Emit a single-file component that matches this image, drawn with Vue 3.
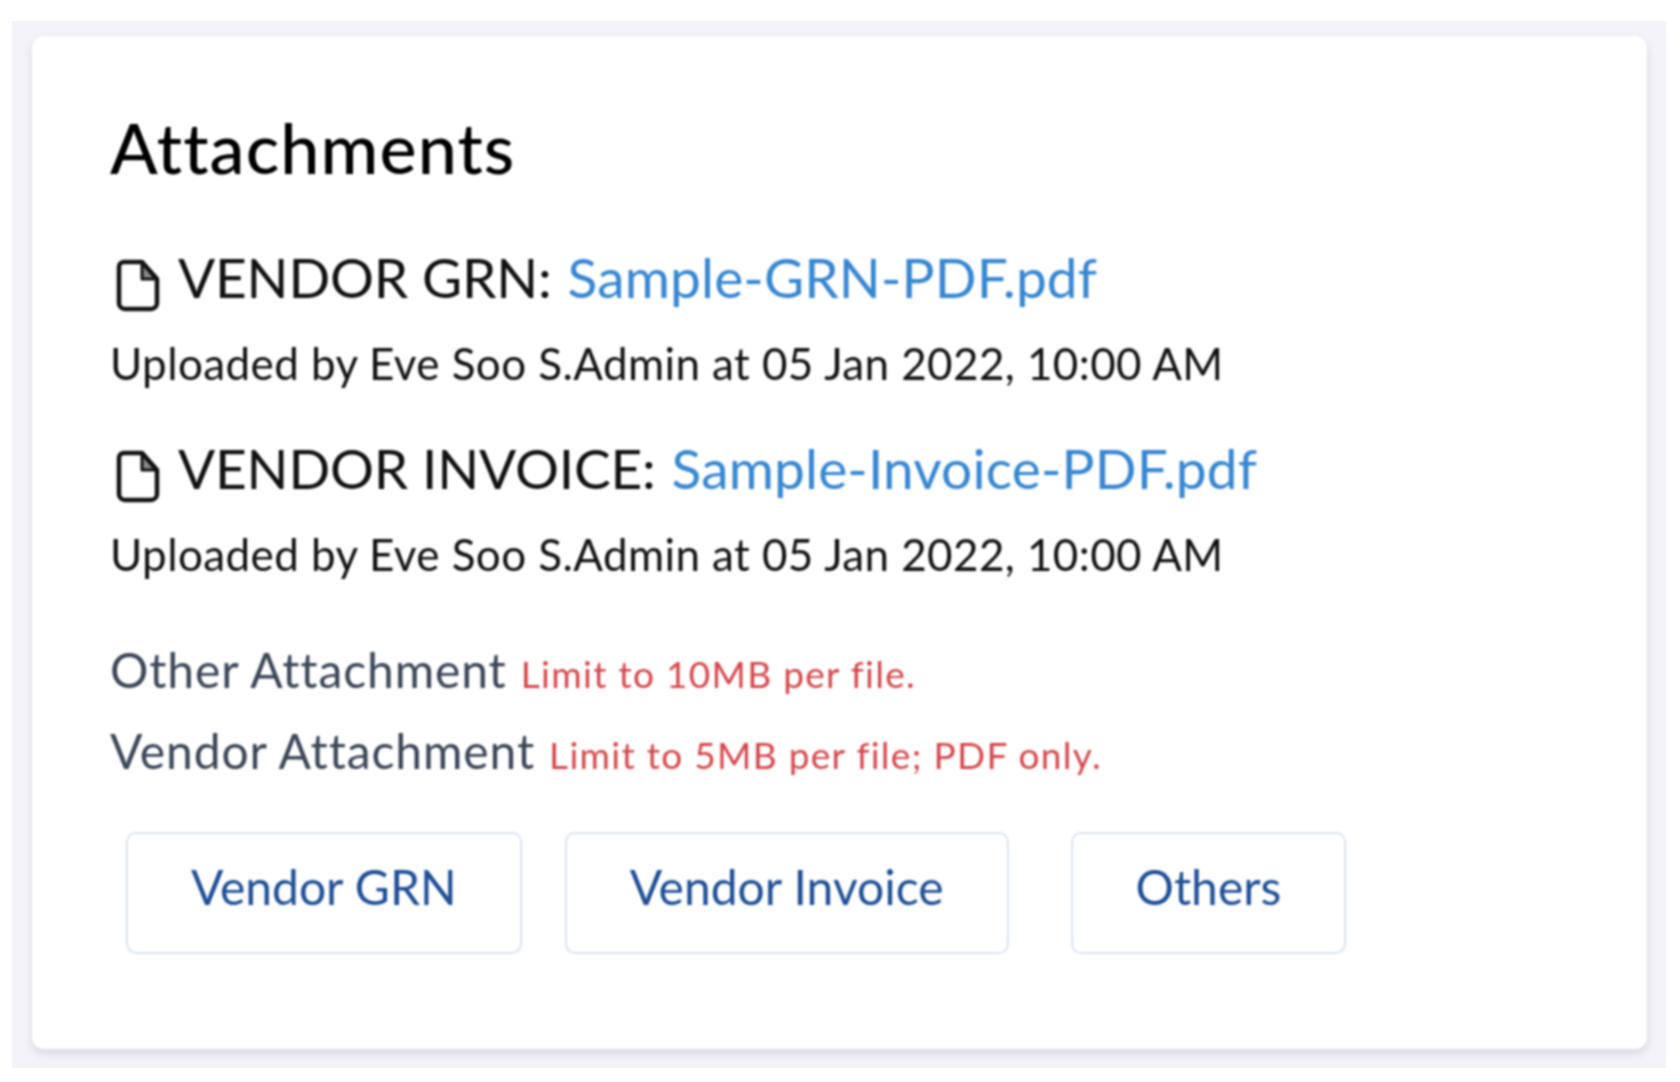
<script setup>
const files = [
  { label: 'VENDOR GRN:', name: 'Sample-GRN-PDF.pdf' },
  { label: 'VENDOR INVOICE:', name: 'Sample-Invoice-PDF.pdf' }
]
const limits = [
  { label: 'Other Attachment', note: 'Limit to 10MB per file.' },
  { label: 'Vendor Attachment', note: 'Limit to 5MB per file; PDF only.' }
]
const buttons = ['Vendor GRN', 'Vendor Invoice', 'Others']
</script>

<template>
  <div class="page">
    <main class="panel">
      <section class="card">
        <h1 class="title">Attachments</h1>
        <div v-for="f in files" :key="f.name" class="file">
          <div class="file-line">
            <svg class="icon" viewBox="0 0 44 53" fill="none" stroke="#111" stroke-width="4.5" stroke-linejoin="round">
              <path d="M26 4L40 20H26Z" fill="#8a8a8a" stroke="none" />
              <path d="M8 3H26L41 20V44A6 6 0 0 1 35 50H9A6 6 0 0 1 3 44V8A5 5 0 0 1 8 3Z" />
              <path d="M26 3V20H41" stroke-width="3" />
            </svg>
            <span class="file-label">{{ f.label }}</span>
            <a class="file-link">{{ f.name }}</a>
          </div>
          <p class="meta">Uploaded by Eve Soo S.Admin at 05 Jan 2022, 10:00 AM</p>
        </div>
        <div class="limits">
          <p v-for="l in limits" :key="l.label" class="limit">
            <span class="limit-label">{{ l.label }}</span>
            <span class="limit-note">{{ l.note }}</span>
          </p>
        </div>
        <div class="actions">
          <button v-for="b in buttons" :key="b" class="btn">{{ b }}</button>
        </div>
      </section>
    </main>
  </div>
</template>

<style>
html, body { margin: 0; background: #fff; }
</style>

<style scoped>
.page {
  width: 1680px;
  height: 1082px;
  padding: 21px 14px 14px 12px;
  box-sizing: border-box;
  font-family: Lato, "Open Sans", sans-serif;
}
.panel {
  height: 100%;
  background: #f3f3f9;
  padding: 15px 19px 19px 20px;
  box-sizing: border-box;
}
.card {
  height: 100%;
  box-sizing: border-box;
  background: #fff;
  border-radius: 12px;
  box-shadow: 0 4px 10px rgba(60, 64, 90, 0.16);
  padding: 70px 78px 0;
  filter: blur(1px);
}
.title {
  margin: 0;
  font-size: 70px;
  letter-spacing: 1.1px;
  line-height: 82px;
  font-weight: 500;
  color: #000;
}
.file { margin-top: 56px; }
.file + .file { margin-top: 47px; }
.file-line {
  display: flex;
  align-items: flex-end;
  height: 66px;
  font-size: 55px;
  line-height: 66px;
}
.icon { width: 44px; height: 53px; margin: 0 18px 0 6px; flex: none; transform: translateY(2px); }
.file-label { color: #111; white-space: pre; letter-spacing: -0.2px; margin-right: 16px; }
.file-link { color: #3787d2; letter-spacing: 0.15px; }
.meta {
  margin: 28px 0 0;
  font-size: 44px;
  letter-spacing: 0.4px;
  line-height: 50px;
  color: #111;
}
.limits { margin-top: 61px; }
.limit {
  margin: 0;
  height: 81px;
  line-height: 60px;
  color: #3c4657;
  font-size: 48px;
  letter-spacing: 0.9px;
}
.limit-note { font-size: 37px; letter-spacing: 1.3px; color: #d4464b; margin-left: 14px; }
.actions {
  display: flex;
  gap: 43px;
  margin: 30px 0 0 16px;
}
.actions .btn:last-child { margin-left: 19px; }
.btn {
  height: 122px;
  padding: 0 63px 14px;
  border: 2px solid #dbe4f0;
  border-radius: 10px;
  background: #fff;
  color: #1f4f96;
  font: inherit;
  font-size: 48px;
}
</style>
